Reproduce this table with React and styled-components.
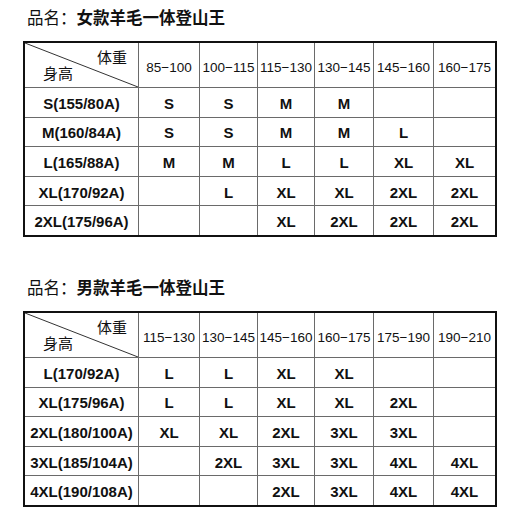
import React from "react";
import styled, { createGlobalStyle } from "styled-components";

const Global = createGlobalStyle`
  html, body { margin: 0; padding: 0; background: #fff; }
  body { font-family: "Liberation Sans", Arial, "Noto Sans CJK SC", sans-serif; color: #111; }
`;

const Page = styled.div`
  width: 520px;
  height: 520px;
  background: #fff;
  overflow: hidden;
`;

const Section = styled.section`
  height: 270px;
  display: flex;
  flex-direction: column;
`;

const Title = styled.h2`
  margin: 0;
  padding: 9px 0 0 27px;
  height: 17px;
  font-family: "Noto Sans CJK SC", sans-serif;
  font-size: 16.5px;
  line-height: 17px;
  font-weight: 400;
  color: #111;
  white-space: nowrap;
`;

const Name = styled.span`
  font-weight: 700;
`;

const Grid = styled.div`
  margin: 15px 0 0 23px;
  width: 470px;
  border: 2px solid #111;
  display: grid;
  grid-template-columns: 114px 61px 58px 57px 59px 60px 61px;
  grid-template-rows: 45px repeat(4, 29.6px) 28.6px;
`;

const Cell = styled.div`
  display: flex;
  align-items: center;
  justify-content: center;
  padding-top: ${(p) => (p.$head ? 5 : 2)}px;
  box-sizing: border-box;
  border-right: ${(p) => (p.$lastCol ? "none" : "1px solid #6a6a6a")};
  border-bottom: ${(p) => (p.$lastRow ? "none" : "1px solid #6a6a6a")};
  font-size: ${(p) => (p.$head ? "13.5px" : "15px")};
  font-weight: ${(p) => (p.$head ? 400 : 700)};
  color: #111;
  white-space: nowrap;
  overflow: hidden;
`;

const Corner = styled.div`
  position: relative;
  border-right: 1px solid #6a6a6a;
  border-bottom: 1px solid #6a6a6a;
  box-sizing: border-box;
  font-family: "Noto Sans CJK SC", sans-serif;
  font-size: 15px;
  line-height: 15px;
  display: flex;
  flex-direction: column;
  justify-content: space-between;
  padding: 6px 11px 7px 18px;
`;

const Diagonal = styled.svg`
  position: absolute;
  inset: 0;
  width: 100%;
  height: 100%;
`;

const CornerTop = styled.span`
  align-self: flex-end;
  position: relative;
`;

const CornerBottom = styled.span`
  align-self: flex-start;
  position: relative;
`;

const SizeTable = ({ title, weights, rows }) => (
  <Section>
    <Title>
      品名：<Name>{title}</Name>
    </Title>
    <Grid>
      <Corner>
        <Diagonal viewBox="0 0 100 100" preserveAspectRatio="none">
          <line x1="0" y1="0" x2="100" y2="100" stroke="#333" strokeWidth="1" vectorEffect="non-scaling-stroke" />
        </Diagonal>
        <CornerTop>体重</CornerTop>
        <CornerBottom>身高</CornerBottom>
      </Corner>
      {weights.map((w, i) => (
        <Cell key={w} $head $lastCol={i === weights.length - 1}>
          {w}
        </Cell>
      ))}
      {rows.map((r, ri) =>
        [r.label, ...r.sizes].map((s, ci) => (
          <Cell
            key={`${ri}-${ci}`}
            $lastCol={ci === weights.length}
            $lastRow={ri === rows.length - 1}
          >
            {s}
          </Cell>
        ))
      )}
    </Grid>
  </Section>
);

const women = {
  title: "女款羊毛一体登山王",
  weights: ["85−100", "100−115", "115−130", "130−145", "145−160", "160−175"],
  rows: [
    { label: "S(155/80A)", sizes: ["S", "S", "M", "M", "", ""] },
    { label: "M(160/84A)", sizes: ["S", "S", "M", "M", "L", ""] },
    { label: "L(165/88A)", sizes: ["M", "M", "L", "L", "XL", "XL"] },
    { label: "XL(170/92A)", sizes: ["", "L", "XL", "XL", "2XL", "2XL"] },
    { label: "2XL(175/96A)", sizes: ["", "", "XL", "2XL", "2XL", "2XL"] },
  ],
};

const men = {
  title: "男款羊毛一体登山王",
  weights: ["115−130", "130−145", "145−160", "160−175", "175−190", "190−210"],
  rows: [
    { label: "L(170/92A)", sizes: ["L", "L", "XL", "XL", "", ""] },
    { label: "XL(175/96A)", sizes: ["L", "L", "XL", "XL", "2XL", ""] },
    { label: "2XL(180/100A)", sizes: ["XL", "XL", "2XL", "3XL", "3XL", ""] },
    { label: "3XL(185/104A)", sizes: ["", "2XL", "3XL", "3XL", "4XL", "4XL"] },
    { label: "4XL(190/108A)", sizes: ["", "", "2XL", "3XL", "4XL", "4XL"] },
  ],
};

export default function App() {
  return (
    <Page>
      <Global />
      <SizeTable {...women} />
      <SizeTable {...men} />
    </Page>
  );
}
